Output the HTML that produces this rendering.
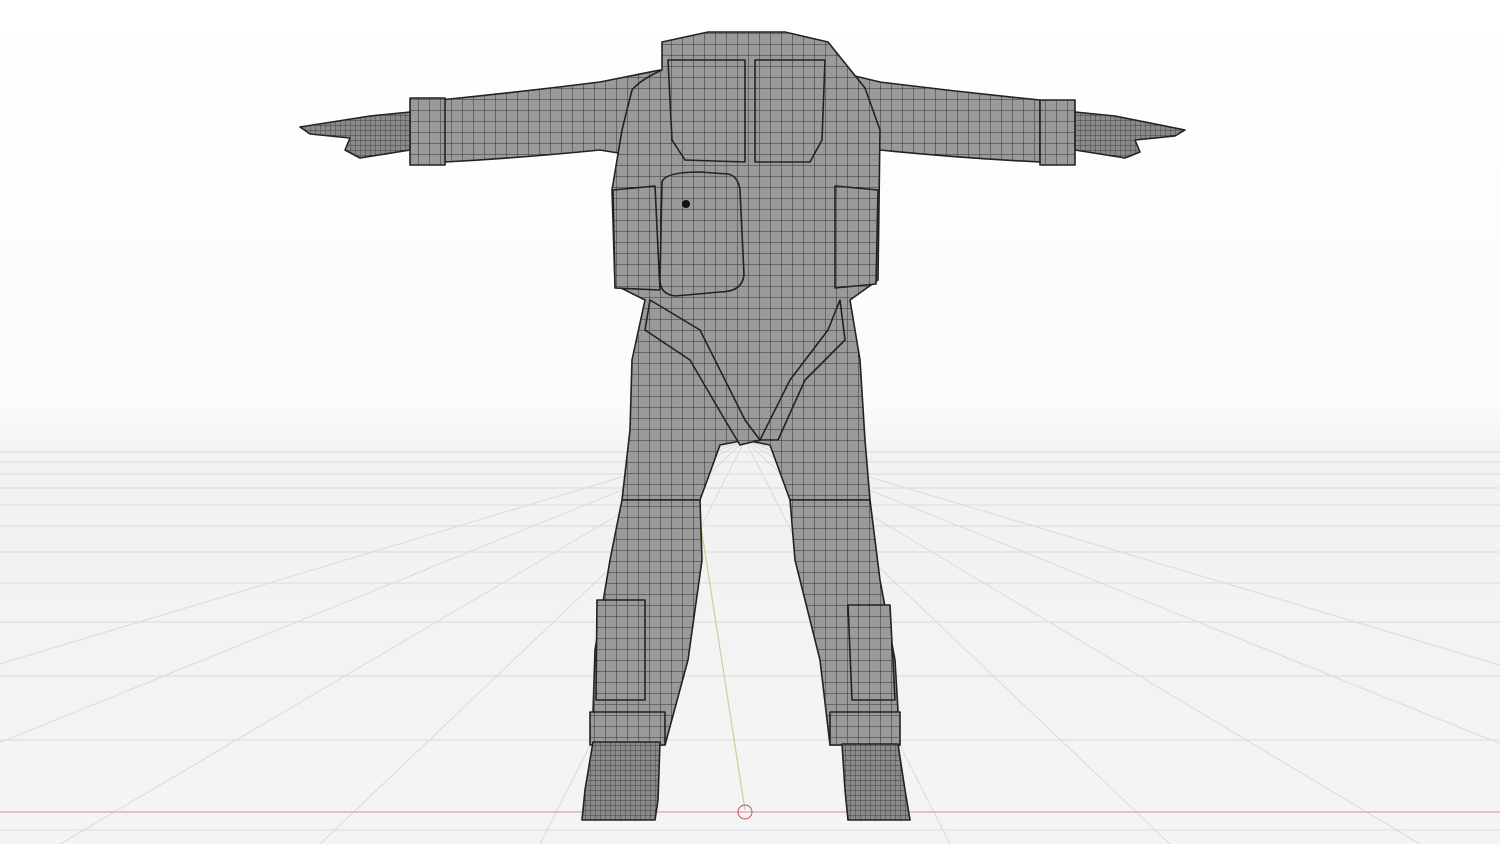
<!DOCTYPE html>
<html><head><style>html,body{margin:0;padding:0;background:#fff;overflow:hidden}svg{display:block}</style></head>
<body>
<svg width="1500" height="844" viewBox="0 0 1500 844" xmlns="http://www.w3.org/2000/svg">
<defs>
<linearGradient id="bg" x1="0" y1="0" x2="0" y2="1">
<stop offset="0" stop-color="#ffffff"/><stop offset="0.48" stop-color="#fbfbfb"/><stop offset="0.54" stop-color="#f2f2f2"/><stop offset="1" stop-color="#f4f4f4"/>
</linearGradient>
<pattern id="mesh" width="11" height="11" patternUnits="userSpaceOnUse">
<rect width="11" height="11" fill="#9a9a9a"/>
<path d="M0 0H11M0 0V11" stroke="#333" stroke-width="1"/>
</pattern>
<pattern id="fine" width="5" height="5" patternUnits="userSpaceOnUse">
<rect width="5" height="5" fill="#8a8a8a"/>
<path d="M0 0H5M0 0V5" stroke="#2a2a2a" stroke-width="0.7"/>
</pattern>
</defs>
<rect width="1500" height="844" fill="url(#bg)"/>
<g stroke="#dadada" stroke-width="1" fill="none">
<path d="M0 452H1500M0 462H1500M0 474H1500M0 488H1500M0 505H1500M0 526H1500M0 552H1500M0 583H1500M0 622H1500M0 676H1500M0 740H1500M0 830H1500"/>
<path d="M745 440L-600 844M745 440L-250 844M745 440L60 844M745 440L320 844M745 440L540 844M745 440L950 844M745 440L1170 844M745 440L1420 844M745 440L1750 844M745 440L2100 844"/>
</g>
<path d="M0 812H1500" stroke="#e0a0a0" stroke-width="1.2"/>
<path d="M700 520L745 810" stroke="#c8d0a0" stroke-width="1.2"/>
<g stroke="#222" stroke-width="1.6" stroke-linejoin="round">
<path d="M440 100Q520 92 600 82L660 70V160L600 150Q520 158 445 162Z" fill="url(#mesh)"/>
<path d="M1040 100Q960 92 880 82L830 70V160L880 150Q960 158 1040 162Z" fill="url(#mesh)"/>
<path d="M410 98H445V165H410Z" fill="url(#mesh)"/>
<path d="M1040 100H1075V165H1040Z" fill="url(#mesh)"/>
<path d="M410 112L370 116L300 127L310 134L350 138L345 150L360 158L410 150Z" fill="url(#fine)"/>
<path d="M1075 112L1115 116L1185 130L1175 136L1135 140L1140 152L1125 158L1075 150Z" fill="url(#fine)"/>
<path d="M662 42L708 32H785L828 42L865 88L880 130L878 280L850 300L860 360L865 440L870 500L790 500L770 445L745 440L720 445L700 500L622 500L630 430L632 360L645 300L615 285L612 190L622 130L632 90Q640 80 662 70Z" fill="url(#mesh)"/>
<path d="M622 500L700 500L702 560L688 660L665 745L592 745L595 650L610 560Z" fill="url(#mesh)"/>
<path d="M790 500L870 500L880 580L895 660L900 745L830 745L820 660L795 560Z" fill="url(#mesh)"/>
<path d="M590 712H665V745H590Z" fill="url(#mesh)"/>
<path d="M830 712H900V745H830Z" fill="url(#mesh)"/>
<path d="M593 742L660 742L658 800L655 820H582L585 790Z" fill="url(#fine)"/>
<path d="M842 744L898 744L905 790L910 820H848L845 790Z" fill="url(#fine)"/>
<path d="M668 60L745 60L745 162L685 160L672 140Z" fill="url(#mesh)"/>
<path d="M755 60L825 60L822 140L810 162L755 162Z" fill="url(#mesh)"/>
<path d="M613 190L655 186L660 290L615 288Z" fill="url(#mesh)"/>
<path d="M835 186L878 190L876 284L835 288Z" fill="url(#mesh)"/>
<path d="M662 182Q665 172 700 172L728 174Q738 176 740 190L744 275Q742 292 720 292L675 296Q660 294 660 280Z" fill="url(#mesh)"/>
<path d="M650 300L700 330L745 420L760 440L740 445L725 420L690 360L645 330Z" fill="url(#mesh)"/>
<path d="M840 300L828 330L790 380L760 440L778 440L805 380L845 340Z" fill="url(#mesh)"/>
<path d="M597 600L645 600L645 700L596 700Z" fill="url(#mesh)"/>
<path d="M848 605L890 605L895 700L852 700Z" fill="url(#mesh)"/>
</g>
<circle cx="686" cy="204" r="4" fill="#111"/>
<circle cx="745" cy="812" r="7" fill="none" stroke="#b55" stroke-width="1"/>
</svg>
</body></html>
